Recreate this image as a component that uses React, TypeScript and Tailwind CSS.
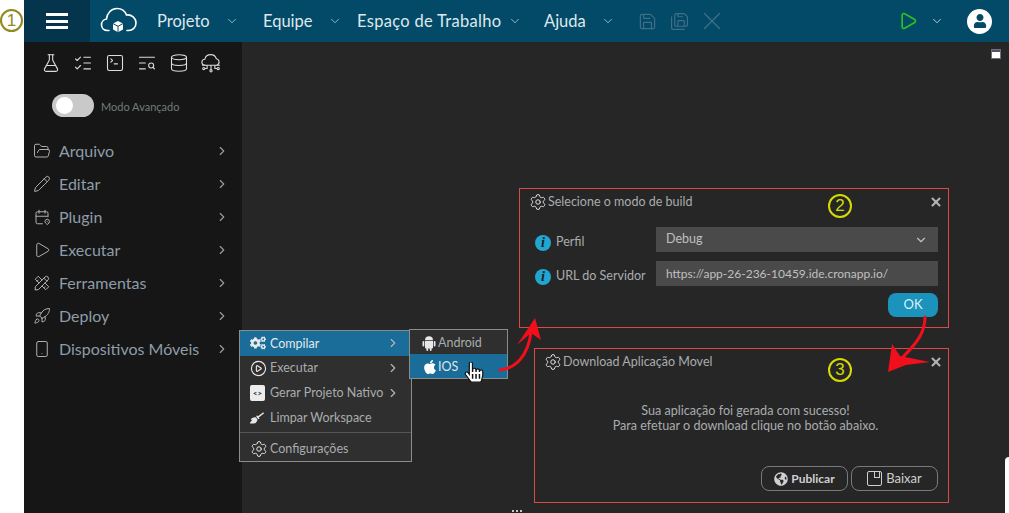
import {
  ChevronDown,
  ChevronRight,
  Database,
  FlaskConical,
  FolderOpen,
  ListChecks,
  Pencil,
  Play,
  Rocket,
  Save,
  SaveAll,
  Settings,
  Smartphone,
  SquareTerminal,
  TextSearch,
  X,
  CirclePlay,
} from "lucide-react";
import { FaApple, FaHandPointer, FaBroom, FaGlobeAmericas, FaCogs, FaUser } from "react-icons/fa";
import { TbCalendarPin, TbTools } from "react-icons/tb";

const FONT = "font-['Lato','Liberation_Sans',sans-serif]";

const topMenu = [
  { label: "Projeto", box: "w-[68px] mr-[38px]" },
  { label: "Equipe", box: "w-[65px] mr-[29px]" },
  { label: "Espaço de Trabalho", box: "w-[151px] mr-[36px] tracking-[0.3px]" },
  { label: "Ajuda", box: "w-[57px]" },
];

const sideMenu = [
  { label: "Arquivo", icon: FolderOpen },
  { label: "Editar", icon: Pencil },
  { label: "Plugin", icon: TbCalendarPin },
  { label: "Executar", icon: Play },
  { label: "Ferramentas", icon: TbTools },
  { label: "Deploy", icon: Rocket },
  { label: "Dispositivos Móveis", icon: Smartphone },
];

const CloudLogo = () => (
  <svg width="38" height="28" viewBox="0 0 38 28" fill="none">
    <path
      d="M9 23.500H7.500C4 23.500 1.500 21 1.500 17.800c0-3 2.200-5.400 5-5.800C7 6 11.500 1.500 17 1.500c4.400 0 8 2.600 9.500 6.500 5-.8 9.500 3.200 9.500 8 0 4.200-3.200 7.500-7.500 7.500H27"
      stroke="white"
      strokeWidth="1.600"
      strokeLinecap="round"
    />
    <path d="M18 14l5 2.600v5.800l-5 2.800-5-2.800v-5.800z" fill="white" />
    <path d="M13 16.600l5 2.700 5-2.700M18 19.300v6" stroke="#024a68" strokeWidth="1" />
  </svg>
);

const CloudNodes = () => (
  <svg width="20" height="20" viewBox="0 0 18 18" fill="none" stroke="#d8d8d8" strokeWidth="1">
    <path d="M4 11H3.500A2.700 2.700 0 0 1 3.500 5.600C4 3 6.200 1.500 8.800 1.500c2.500 0 4.300 1.500 5 3.700a3 3 0 0 1 .4 5.800H14" />
    <path d="M1 11h16M9 11v4M5.500 11v3H3.500M12.500 11v3h2" />
    <circle cx="9" cy="16" r="1" />
    <circle cx="2.500" cy="14" r="1" />
    <circle cx="15.500" cy="14" r="1" />
  </svg>
);

const AndroidIcon = () => (
  <svg width="14" height="16" viewBox="0 0 14 16" fill="#e8e8e8">
    <path d="M3 5.200a4 4 0 0 1 8 0z" />
    <path d="M3 6h8v6.500a1 1 0 0 1-1 1H4a1 1 0 0 1-1-1z" />
    <rect x="0.500" y="6" width="1.800" height="5.500" rx="0.900" />
    <rect x="11.700" y="6" width="1.800" height="5.500" rx="0.900" />
    <rect x="4.400" y="12" width="1.800" height="4" rx="0.900" />
    <rect x="7.800" y="12" width="1.800" height="4" rx="0.900" />
  </svg>
);

const CircledNumber = ({ n, className }: { n: number; className: string }) => (
  <div
    className={`flex items-center justify-center rounded-full border-2 font-['Liberation_Sans',sans-serif] ${className}`}
  >
    {n}
  </div>
);

const InfoDot = () => (
  <span className="flex h-4 w-4 shrink-0 items-center justify-center rounded-full bg-[#22a5cf] font-['Liberation_Serif',serif] text-[14px] font-bold italic leading-none text-[#12232c]">
    i
  </span>
);

const ContextRow = ({
  icon,
  label,
  arrow,
  active,
  className,
}: {
  icon: React.ReactNode;
  label: string;
  arrow?: boolean;
  active?: boolean;
  className: string;
}) => (
  <div
    className={`flex items-center pl-[10px] pr-[11px] text-[12.500px] ${className} ${
      active ? "bg-[#1a6d99] text-[#e2e8ec]" : "text-[#a9acae]"
    }`}
  >
    <span className="flex w-[20px] shrink-0 items-center text-[#e8e8e8]">{icon}</span>
    <span className="flex-1 whitespace-nowrap pt-[1px]">{label}</span>
    {arrow && <ChevronRight size={14} className="text-[#b5b5b5]" />}
  </div>
);

export default function App() {
  return (
    <div className={`flex h-[513px] w-[1009px] overflow-hidden bg-white ${FONT}`}>
      {/* Annotation strip */}
      <div className="w-[24px] shrink-0 pt-[9px]">
        <CircledNumber n={1} className="h-[23px] w-[23px] border-[#8f8a1e] text-[17px] text-[#8f8a1e]" />
      </div>

      <div className="flex min-w-0 flex-1 flex-col">
        {/* Header */}
        <header className="flex h-[42px] shrink-0 items-center bg-[#024a68] text-white">
          <div className="flex h-full w-[66px] shrink-0 flex-col items-center justify-center gap-[3.500px] bg-[#04354d]">
            <span className="h-[3px] w-[22px] bg-white" />
            <span className="h-[3px] w-[22px] bg-white" />
            <span className="h-[3px] w-[22px] bg-white" />
          </div>
          <div className="ml-[10px] mr-[19px] w-[38px]">
            <CloudLogo />
          </div>
          {topMenu.map((item) => (
            <div key={item.label} className={`flex shrink-0 items-center ${item.box}`}>
              <span className="flex-1 whitespace-nowrap text-[16.500px] text-[#dfe8ec]">{item.label}</span>
              <ChevronDown size={14} strokeWidth={1.200} className="-mr-[14px] text-[#d5e2e8]" />
            </div>
          ))}
          <div className="ml-[37px] flex items-center gap-[13px] text-[#416e84]">
            <Save size={19} strokeWidth={1.500} />
            <SaveAll size={19} strokeWidth={1.500} />
            <X size={30} strokeWidth={1.100} className="-ml-[5px]" />
          </div>
          <Play size={20} strokeWidth={2} className="ml-[171px] shrink-0 text-[#2fc01f]" />
          <ChevronDown size={14} strokeWidth={1.200} className="ml-[12px] shrink-0 text-white" />
          <div className="ml-[23px] flex h-[25px] w-[25px] shrink-0 items-center justify-center rounded-full bg-white">
            <FaUser size={14} className="text-[#024a68]" />
          </div>
        </header>

        {/* Body */}
        <div className="relative flex min-h-0 flex-1 bg-[#262626]">
          <aside className="w-[218px] shrink-0 bg-[#161616]">
            <div className="flex items-center gap-[12px] pl-[17px] pt-[11px] text-[#dcdcdc]">
              <FlaskConical size={20} strokeWidth={1.300} />
              <ListChecks size={20} strokeWidth={1.300} />
              <SquareTerminal size={20} strokeWidth={1.300} />
              <TextSearch size={20} strokeWidth={1.300} />
              <Database size={20} strokeWidth={1.300} />
              <CloudNodes />
            </div>
            <div className="mt-[21px] flex items-center pl-[28px]">
              <div className="flex h-[23px] w-[42px] items-center rounded-full bg-[#c9c9c9] pl-[4px]">
                <span className="h-[17px] w-[17px] rounded-full bg-white" />
              </div>
              <span className="ml-[7px] pt-[3px] text-[11px] text-[#6f7f78]">Modo Avançado</span>
            </div>
            <nav className="mt-[17px] flex flex-col">
              {sideMenu.map(({ label, icon: Icon }) => (
                <div key={label} className="flex h-[33px] items-center pl-[9px] pr-[13px]">
                  <Icon size={18} strokeWidth={1.300} className="mr-[8px] shrink-0 text-[#b4b4b4]" />
                  <span className="flex-1 whitespace-nowrap text-[16px] text-[#8d9da9]">{label}</span>
                  <ChevronRight size={14} strokeWidth={2} className="text-[#9a9a9a]" />
                </div>
              ))}
            </nav>
          </aside>

          {/* Window toggle */}
          <div className="absolute right-[8px] top-[7px] h-[10px] w-[10px] border border-[#6f6f80] bg-white">
            <div className="h-[2px] bg-[#55556a]" />
          </div>
          <div className="absolute bottom-[1px] left-[488px] flex gap-[2px]">
            <span className="h-[2px] w-[2px] bg-[#c8c8c8]" />
            <span className="h-[2px] w-[2px] bg-[#c8c8c8]" />
            <span className="h-[2px] w-[2px] bg-[#c8c8c8]" />
          </div>
          <div className="absolute bottom-0 right-0 h-[56px] w-[4px] rounded-tl-[4px] bg-white" />

          {/* Context menu */}
          <div className="absolute left-[215px] top-[288px] flex h-[132px] w-[173px] flex-col border border-[#8c8c8c] bg-[#2f2f2f]">
            <ContextRow className="h-[25px]" icon={<FaCogs size={16} />} label="Compilar" arrow active />
            <ContextRow
              className="h-[25px]"
              icon={<CirclePlay size={17} strokeWidth={1.600} />}
              label="Executar"
              arrow
            />
            <ContextRow
              className="h-[25px]"
              icon={
                <span className="flex h-[16px] w-[15px] items-center justify-center rounded-[2px] bg-[#ececec] text-[8px] font-bold text-[#222]">
                  {"<>"}
                </span>
              }
              label="Gerar Projeto Nativo"
              arrow
            />
            <ContextRow className="h-[25px]" icon={<FaBroom size={14} />} label="Limpar Workspace" />
            <div className="mt-[2px] h-[1px] bg-[#555]" />
            <ContextRow
              className="h-[28px] pt-[4px]"
              icon={<Settings size={18} strokeWidth={1.300} />}
              label="Configurações"
            />
          </div>

          {/* Submenu */}
          <div className="absolute left-[385px] top-[287px] flex h-[50px] w-[99px] flex-col border border-[#8c8c8c] bg-[#2f2f2f] text-[12.500px]">
            <div className="flex h-[24px] items-center pl-[12px] pt-[2px] text-[#a9acae]">
              <span className="mr-[2px] w-[14px]">
                <AndroidIcon />
              </span>
              Android
            </div>
            <div className="flex h-[24px] items-center bg-[#1a6d99] pl-[12px] pt-[2px] text-[#dfe6ea]">
              <FaApple size={16} className="text-white" />
              IOS
            </div>
          </div>

          {/* Build dialog */}
          <div className="absolute left-[495px] top-[146px] flex h-[140px] w-[430px] flex-col border border-[#e04848] bg-[#262626] px-[10px] pt-[4px]">
            <div className="flex h-[18px] items-center text-[12.500px] text-[#a9acae]">
              <Settings size={18} strokeWidth={1.300} className="-ml-[1px] mr-[1px] text-[#e2e2e2]" />
              Selecione o modo de build
              <X size={14} strokeWidth={3.500} className="-mr-[5px] ml-auto text-[#b4b4b4]" />
            </div>
            <div className="mt-[16px] grid grid-cols-[126px_1fr] gap-y-[9px] text-[12.500px] text-[#a9acae]">
              <div className="flex h-[25px] items-center gap-[5px] pl-[5px] pt-[6px]">
                <InfoDot />
                Perfil
              </div>
              <div className="flex h-[25px] items-center justify-between bg-[#4a4a4a] px-[10px] text-[#c0c0c0]">
                Debug
                <ChevronDown size={14} strokeWidth={2} />
              </div>
              <div className="flex h-[25px] items-center gap-[5px] whitespace-nowrap pl-[5px] pt-[6px]">
                <InfoDot />
                URL do Servidor
              </div>
              <div className="flex h-[25px] items-center bg-[#4a4a4a] px-[10px] text-[12px] text-[#c0c0c0]">
                https://app-26-236-10459.ide.cronapp.io/
              </div>
            </div>
            <div className="mt-[7px] flex justify-end">
              <div className="flex h-[24px] w-[50px] items-center justify-center rounded-[8px] bg-[#1b93bd] text-[13px] text-[#dff0f6]">
                OK
              </div>
            </div>
          </div>

          {/* Download dialog */}
          <div className="absolute left-[510px] top-[306px] flex h-[155px] w-[415px] flex-col border border-[#e04848] bg-[#262626] px-[10px] pt-[4px]">
            <div className="flex h-[18px] items-center text-[12.500px] text-[#a9acae]">
              <Settings size={18} strokeWidth={1.300} className="-ml-[1px] mr-[1px] text-[#e2e2e2]" />
              Download Aplicação Movel
              <X size={14} strokeWidth={3.500} className="-mr-[5px] ml-auto text-[#b4b4b4]" />
            </div>
            <div className="mt-[33px] pl-[8px] text-center text-[12.600px] leading-[14.500px] text-[#a9acae]">
              <p>Sua aplicação foi gerada com sucesso!</p>
              <p>Para efetuar o download clique no botão abaixo.</p>
            </div>
            <div className="mt-[33px] flex justify-end gap-[3px]">
              <div className="flex h-[25px] w-[87px] items-center justify-center gap-[3px] rounded-[8px] border border-[#7a7a7a] text-[12px] font-bold text-[#d0d0d0]">
                <FaGlobeAmericas size={14} />
                Publicar
              </div>
              <div className="flex h-[25px] w-[87px] items-center justify-center gap-[4px] rounded-[8px] border border-[#7a7a7a] text-[13px] text-[#d0d0d0]">
                <span className="relative h-[15px] w-[15px] rounded-[2px] border border-[#cfcfcf]">
                  <span className="absolute right-[1px] top-0 h-[6px] w-[6px] border border-t-0 border-[#cfcfcf]" />
                </span>
                Baixar
              </div>
            </div>
          </div>

          <CircledNumber
            n={2}
            className="absolute left-[804px] top-[152px] h-[24px] w-[24px] border-[#d6dc00] text-[17px] text-[#d6dc00]"
          />
          <CircledNumber
            n={3}
            className="absolute left-[804px] top-[316px] h-[24px] w-[24px] border-[#d6dc00] text-[17px] text-[#d6dc00]"
          />

          {/* Red annotation arrows */}
          <svg
            className="absolute left-[470px] top-[260px]"
            width="470"
            height="90"
            viewBox="0 0 470 90"
            fill="none"
          >
            <path d="M6 68C22 66 34 54 37 30" stroke="#f00f1a" strokeWidth="3" strokeLinecap="round" />
            <path d="M41 16L23 43L37 31L47 38Z" fill="#f00f1a" />
            <path d="M431 15C431 30 424 40 408 56" stroke="#f00f1a" strokeWidth="3" strokeLinecap="round" />
            <path d="M394 70L398 42L406 54L436 60L412 63Z" fill="#f00f1a" />
          </svg>

          {/* Hand cursor */}
          <FaHandPointer
            size={20}
            className="absolute left-[440px] top-[320px] text-white"
            stroke="#111"
            strokeWidth={30}
          />
        </div>
      </div>
    </div>
  );
}
